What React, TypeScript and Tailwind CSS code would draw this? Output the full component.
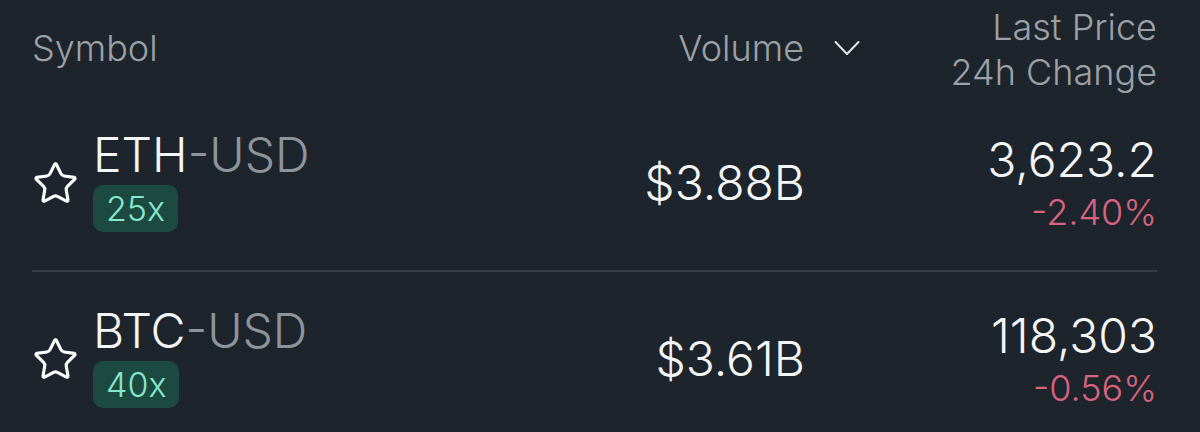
import { Star } from 'lucide-react';

interface Market {
  base: string;
  quote: string;
  leverage: string;
  volume: string;
  price: string;
  change: string;
}

const markets: Market[] = [
  { base: 'ETH', quote: 'USD', leverage: '25x', volume: '$3.88B', price: '3,623.2', change: '-2.40%' },
  { base: 'BTC', quote: 'USD', leverage: '40x', volume: '$3.61B', price: '118,303', change: '-0.56%' },
];

function MarketRow({ m }: { m: Market }) {
  return (
    <div className="flex h-[174px] items-center">
      <div className="flex flex-1 items-center gap-[14px]">
        <Star size={47} strokeWidth={1.6} className="text-white" />
        <div className="flex flex-col items-start">
          <div className="-mt-[4px] text-[48px] leading-none">
            <span className="text-[#f4f5f6]">{m.base}</span>
            <span className="text-[#8e949b]">-{m.quote}</span>
          </div>
          <span className="mt-[6px] rounded-[10px] bg-[#1c4a41] px-[13px] text-[34px] leading-[47px] text-[#86e8ca]">
            {m.leverage}
          </span>
        </div>
      </div>
      <div className="w-[300px] text-right text-[48px] leading-none text-[#f4f5f6]">{m.volume}</div>
      <div className="flex w-[352px] flex-col items-end">
        <span className="text-[48px] leading-none text-[#f4f5f6]">{m.price}</span>
        <span className="mt-[10px] text-[36px] leading-none text-[#d9637f]">{m.change}</span>
      </div>
    </div>
  );
}

export default function App() {
  return (
    <div
      className="h-[432px] w-[1200px] overflow-hidden bg-[#1e242b] pl-[32px] pr-[43px] font-light"
      style={{ fontFamily: 'Inter, "Noto Sans", sans-serif' }}
    >
      {/* header */}
      <div className="flex h-[96px] items-center text-[36px] text-[#9ca1a7]">
        <div className="flex-1 leading-none">Symbol</div>
        <div className="-mr-[55px] flex w-[355px] items-center justify-end gap-[30px] leading-none">
          <span>Volume</span>
          <svg width="26" height="16" viewBox="0 0 26 16" fill="none" className="text-[#e4e6e8]">
            <polyline points="1.5,2 13,14 24.5,2" stroke="currentColor" strokeWidth="2" strokeLinecap="round" strokeLinejoin="round" />
          </svg>
        </div>
        <div className="flex w-[352px] flex-col items-end pt-[4px] leading-[45px]">
          <span>Last Price</span>
          <span>24h Change</span>
        </div>
      </div>

      <MarketRow m={markets[0]} />
      <div className="h-[2px] bg-[#373d44]" />
      <MarketRow m={markets[1]} />
    </div>
  );
}
